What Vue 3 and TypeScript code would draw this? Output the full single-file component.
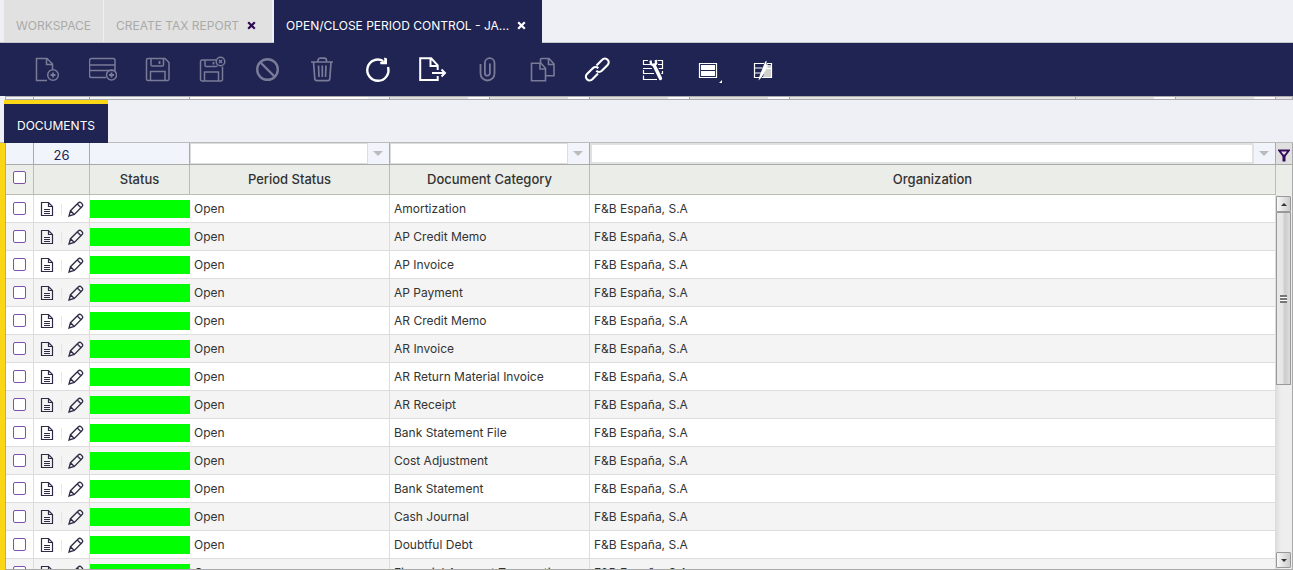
<script setup lang="ts">
import { computed, ref } from 'vue'

interface DocumentRow {
  category: string
  status: string
  organization: string
  selected: boolean
}

interface ToolAction {
  id: string
  label: string
  enabled: boolean
}

const categories: string[] = [
  'Amortization',
  'AP Credit Memo',
  'AP Invoice',
  'AP Payment',
  'AR Credit Memo',
  'AR Invoice',
  'AR Return Material Invoice',
  'AR Receipt',
  'Bank Statement File',
  'Cost Adjustment',
  'Bank Statement',
  'Cash Journal',
  'Doubtful Debt',
  'Financial Account Transaction',
]

const rows = ref<DocumentRow[]>(
  categories.map((category) => ({
    category,
    status: 'Open',
    organization: 'F&B España, S.A',
    selected: false,
  })),
)

const total = 26
const allSelected = ref(false)
const filters = ref({ status: '', category: '', organization: '' })

function toggleAll(): void {
  rows.value.forEach((row) => (row.selected = allSelected.value))
}

const tools: ToolAction[] = [
  { id: 'new', label: 'New in form', enabled: false },
  { id: 'newrow', label: 'New in grid', enabled: false },
  { id: 'save', label: 'Save', enabled: false },
  { id: 'saveclose', label: 'Save and close', enabled: false },
  { id: 'undo', label: 'Undo', enabled: false },
  { id: 'delete', label: 'Delete', enabled: false },
  { id: 'refresh', label: 'Refresh', enabled: true },
  { id: 'export', label: 'Export', enabled: true },
  { id: 'attach', label: 'Attachments', enabled: false },
  { id: 'copy', label: 'Clone', enabled: false },
  { id: 'link', label: 'Link', enabled: true },
  { id: 'personalize', label: 'Personalize form', enabled: true },
  { id: 'views', label: 'Views', enabled: true },
  { id: 'editgrid', label: 'Edit in grid', enabled: true },
]

const visibleRows = 13.3
const thumbStyle = computed(() => ({ height: `${Math.round((visibleRows / total) * 100)}%` }))
</script>

<template>
  <div class="app">
    <nav class="tabs" aria-label="Windows">
      <div class="tab"><button class="tab-name">WORKSPACE</button></div>
      <div class="tab">
        <button class="tab-name">CREATE TAX REPORT</button>
        <button class="close" aria-label="Close tab">
          <svg width="9" height="9" viewBox="0 0 9 9" stroke-width="2.2"><path d="M1.2 1.2l6.6 6.6M7.8 1.2L1.2 7.8" /></svg>
        </button>
      </div>
      <div class="tab active">
        <button class="tab-name">OPEN/CLOSE PERIOD CONTROL - JA...</button>
        <button class="close" aria-label="Close tab">
          <svg width="9" height="9" viewBox="0 0 9 9" stroke-width="2.2"><path d="M1.2 1.2l6.6 6.6M7.8 1.2L1.2 7.8" /></svg>
        </button>
      </div>
    </nav>

    <div class="toolbar" role="toolbar">
      <button
        v-for="tool in tools"
        :key="tool.id"
        class="tool"
        :disabled="!tool.enabled"
        :aria-label="tool.label"
      >
        <svg width="28" height="28" viewBox="0 0 28 28" stroke-width="1.5">
          <g v-if="tool.id === 'new'">
            <path d="M13 24.5H2.5v-22h10.500l5.500 5.500v5M12.500 3v5.500h5.500" />
            <circle cx="19" cy="19" r="5.3" /><path d="M19 16.500v5M16.500 19h5" stroke-width="1.800" />
          </g>
          <g v-else-if="tool.id === 'newrow'">
            <path d="M17 21.5H2.5a2 2 0 0 1-2-2v-15a2 2 0 0 1 2-2H24a2 2 0 0 1 2 2v11M.5 9H26M.5 14.5H26" />
            <circle cx="22.500" cy="19" r="5" /><path d="M22.5 16.5v5M20 19h5" stroke-width="1.8" />
          </g>
          <g v-else-if="tool.id === 'save'">
            <path d="M4 2.5h17l4 4V23a1.500 1.500 0 0 1-1.500 1.500H4A1.500 1.500 0 0 1 2.500 23V4A1.500 1.500 0 0 1 4 2.500zM7 2.500V9a1 1 0 0 0 1 1h10.500a1 1 0 0 0 1-1V2.500M6.500 24.500v-9H21v9" />
            <path d="M15.5 5v3" stroke-width="1.8" />
          </g>
          <g v-else-if="tool.id === 'saveclose'">
            <path d="M17 4H3a1.5 1.5 0 0 0-1.500 1.500v18A1.500 1.500 0 0 0 3 25h19a1.500 1.500 0 0 0 1.500-1.500v-13M6 4v5.500a1 1 0 0 0 1 1h10a1 1 0 0 0 1-1M5.500 25v-9h14v9" />
            <path d="M14.5 6v2.5" stroke-width="1.8" />
            <circle cx="21.5" cy="5.5" r="4.3" /><path d="M20 4l3 3M23 4l-3 3" />
          </g>
          <g v-else-if="tool.id === 'undo'" stroke-width="2.4">
            <circle cx="13.5" cy="13.5" r="10.3" /><path d="M6.500 6.500l14 14" />
          </g>
          <g v-else-if="tool.id === 'delete'" stroke-width="1.7">
            <path d="M2 6h22M9 6V4.500a2.300 2.300 0 0 1 2.300-2.300h4a2.300 2.300 0 0 1 2.200 2.300V6M4.500 6l1.300 17a2 2 0 0 0 2 1.700h11a2 2 0 0 0 2-1.700L22 6M9.500 9.500L10 21M13.300 9.500V21M17 9.500L16.500 21" />
          </g>
          <g v-else-if="tool.id === 'refresh'">
            <path d="M24 11A10.600 10.600 0 1 1 19.200 5" stroke-width="2.4" />
            <path class="solid" d="M20.200 1.500l2.800 1v5.700h-6.500l-.5-2.200 4.200-1z" />
          </g>
          <g v-else-if="tool.id === 'export'" stroke-width="2">
            <path d="M18.700 20v4H1.200V2.300h11l6.500 7V14M11.500 3v7h7M13 17h13M22.500 13.500L26 17l-3.500 3.500" />
          </g>
          <g v-else-if="tool.id === 'attach'" stroke-width="1.8">
            <path d="M6.500 8v9.500a7 7 0 0 0 14 0V7a4.800 4.800 0 0 0-9.600 0v10.200a2.500 2.500 0 0 0 5 0V7.500" />
          </g>
          <g v-else-if="tool.id === 'copy'" stroke-width="1.6">
            <path d="M2.500 7.200h9.500l4.500 5v12.500h-14zM11 7.500V13h5.500M11.500 7V3.500a1 1 0 0 1 1-1H20l5 5.500v11.700h-8.500M19.500 3v5.500H25" />
          </g>
          <g v-else-if="tool.id === 'link'" stroke-width="2.1">
            <path d="M12.500 9.500l5.700-5.800a3.700 3.700 0 0 1 5.400 0 3.700 3.700 0 0 1 0 5.300l-5.800 5.800a4 4 0 0 1-5.500 0M14 17.500l-5.600 5.800a3.700 3.700 0 0 1-5.400 0 3.700 3.700 0 0 1 0-5.300l5.800-5.800a4 4 0 0 1 5.500 0" />
          </g>
          <g v-else-if="tool.id === 'personalize'">
            <path d="M9 4.500H4.500v4H11M18.500 4.500h5v4H19M4 12.500h9M19 12.500h4.500V9M4.500 14v3.500H15M20 17.500h3.500V15M4.500 19.500v4H18" stroke-width="1.200" />
            <path d="M15 10l6.500 12.500" stroke="#202452" stroke-width="6" />
            <path d="M15 9l6.500 13.500" stroke-width="3.400" stroke-linecap="round" />
            <path d="M11.500 4.500l.5 3.500 3 1.500 2.200-2L16.700 4" stroke-width="2.300" />
          </g>
          <g v-else-if="tool.id === 'views'">
            <path d="M5.500 7.500h17v14h-17z" stroke-width="1.2" />
            <path class="solid" d="M7 9h14v5H7zM7 15h14v5H7zM28 24v3h-3z" />
          </g>
          <g v-else>
            <path d="M15 7.500H5.500v14H11M5.500 12h8M5.500 17H12M18 7.500h4.500v14H13" stroke-width="1.200" />
            <path class="shade" d="M17 9h5v12h-8z" />
            <path d="M18 8v4.500h5" stroke-width="1" />
            <path class="solid" d="M17.500 4.500V13L12.500 21.500l-3 3 1-4.500 5.500-14z" />
          </g>
        </svg>
      </button>
    </div>

    <div class="parent-strip">
      <i class="p-check"></i><i class="p-tools"></i><i class="p-100"></i>
      <i class="p-200 lit"></i><i class="p-100 dim"></i><i class="p-100 dim"></i><i class="p-100 dim"></i><i class="p-100 dim"></i>
      <i class="p-fill"></i><i class="p-100 dim"></i><i class="p-100 dim"></i><i class="p-end"></i>
    </div>

    <div class="child-tabs" role="tablist">
      <button class="child-tab" role="tab" aria-selected="true">DOCUMENTS</button>
    </div>

    <main class="grid">
      <div class="viewport">
        <table>
          <colgroup>
            <col class="c-check" /><col class="c-tools" /><col class="c-status" />
            <col class="c-wide" /><col class="c-wide" /><col />
          </colgroup>
          <thead>
            <tr class="filter-row">
              <td></td>
              <td class="count">{{ total }}</td>
              <td></td>
              <td>
                <div class="combo">
                  <input v-model="filters.status" type="text" aria-label="Filter by period status" />
                  <button aria-label="Show period statuses"><span class="caret"></span></button>
                </div>
              </td>
              <td>
                <div class="combo">
                  <input v-model="filters.category" type="text" aria-label="Filter by document category" />
                  <button aria-label="Show document categories"><span class="caret"></span></button>
                </div>
              </td>
              <td>
                <div class="combo boxed">
                  <input v-model="filters.organization" type="text" aria-label="Filter by organization" />
                  <button aria-label="Show organizations"><span class="caret"></span></button>
                </div>
              </td>
            </tr>
            <tr class="head-row">
              <th class="check">
                <input v-model="allSelected" type="checkbox" aria-label="Select all" @change="toggleAll" />
              </th>
              <th></th>
              <th>Status</th>
              <th>Period Status</th>
              <th>Document Category</th>
              <th>Organization</th>
            </tr>
          </thead>
          <tbody>
            <tr v-for="row in rows" :key="row.category">
              <td class="check">
                <input v-model="row.selected" type="checkbox" :aria-label="`Select ${row.category}`" />
              </td>
              <td>
                <div class="row-tools">
                  <button aria-label="Open in form">
                    <svg width="14" height="16" viewBox="0 0 14 16" stroke-width="1.2">
                      <path d="M1.500 1.500H8.500l4 4V14.500h-11zM8.500 1.500v4h4" />
                      <path d="M4 8.500h6M4 10.500h6M4 12.500h6" stroke-width="1" />
                    </svg>
                  </button>
                  <span class="split"></span>
                  <button aria-label="Edit in grid">
                    <svg width="16" height="16" viewBox="0 0 16 16" stroke-width="1.3">
                      <path d="M1 15l1.500-5.300 7.700-7.700c1-1 2.100-1 3-.1l.8.8c.9.9.9 2-.1 3L6.300 13.500zM9.300 3l3.700 3.700M2.500 9.700l3.800 3.800" />
                    </svg>
                  </button>
                </div>
              </td>
              <td class="swatch-cell"><div class="swatch"></div></td>
              <td>{{ row.status }}</td>
              <td>{{ row.category }}</td>
              <td>{{ row.organization }}</td>
            </tr>
          </tbody>
        </table>
      </div>
      <aside class="side">
        <button class="funnel" aria-label="Clear filters">
          <svg width="12" height="13" viewBox="0 0 12 13">
            <path d="M1.2 1.5h9.600L7 6.500H5z" stroke-width="1.8" />
            <path d="M6 6.500v6" stroke-width="3" />
          </svg>
        </button>
        <div class="side-head"></div>
        <div class="scrollbar">
          <button class="step" aria-label="Scroll up"><span class="arrow up"></span></button>
          <div class="track">
            <div class="thumb" :style="thumbStyle"><span class="grip"></span></div>
          </div>
          <button class="step" aria-label="Scroll down"><span class="arrow down"></span></button>
        </div>
      </aside>
    </main>
  </div>
</template>

<style>
body {
  margin: 0;
  overflow: hidden;
}
</style>

<style scoped>
.app {
  display: flex;
  flex-direction: column;
  height: 100vh;
  background: #eff0f6;
  color: #333;
  font-family: Inter, "Open Sans", sans-serif;
  font-size: 12px;
  overflow: hidden;
}
* {
  box-sizing: border-box;
}
button {
  padding: 0;
  border: 0;
  background: none;
  color: inherit;
  font: inherit;
  display: flex;
  align-items: center;
  justify-content: center;
}
svg {
  display: block;
  fill: none;
  stroke: currentColor;
}
.solid {
  fill: currentColor;
  stroke: none;
}
.shade {
  fill: #d0d0cc;
  stroke: none;
}

.tabs {
  display: flex;
  flex: none;
  gap: 1px;
  height: 43px;
  padding-left: 4px;
  border-bottom: 1px solid #c3c7cc;
}
.tab {
  display: flex;
  align-items: center;
  gap: 8px;
  height: 42px;
  padding: 8px 12px 0;
  background: #e1e1e1;
  color: #aaa;
  white-space: nowrap;
}
.tab + .tab {
  padding-right: 16px;
}
.tab.active {
  height: 43px;
  margin-left: 1px;
  background: #202452;
  color: #fff;
}
.close {
  color: #2e0854;
}
.active .close {
  color: #fff;
}

.toolbar {
  display: flex;
  flex: none;
  height: 53px;
  padding-left: 20px;
  background: #202452;
}
.tool {
  width: 55px;
  height: 53px;
  color: #fff;
}
.tool:disabled {
  color: #797b98;
}

.parent-strip {
  display: flex;
  flex: none;
  height: 4px;
  margin-left: 5px;
  border: 1px solid #aaa;
  border-right: 0;
  background: #f1f4fb;
}
.parent-strip i {
  border-right: 1px solid #aaa;
}
.p-check { width: 28px; }
.p-tools { width: 56px; }
.p-100 { width: 100px; }
.p-200 { width: 200px; }
.p-fill { flex: 1; background: #e4e4e4; }
.p-end { width: 17px; background: #e8e0e8; }
.lit { background: linear-gradient(to right, #fff 178px, #f1f4fb 178px); }
.dim { background: linear-gradient(to right, #e1e0e0 78px, #fafaff 78px); }

.child-tabs {
  display: flex;
  flex: none;
  height: 43px;
  padding-left: 4px;
  border-bottom: 1px solid #bbb;
}
.child-tab {
  height: 43px;
  padding: 4px 13px 0;
  border-top: 4px solid #fbd616;
  background: #202452;
  color: #fff;
}

.grid {
  display: flex;
  flex: 1;
  min-height: 0;
  border-left: 5px solid #fbd616;
}
.viewport {
  flex: 1;
  min-width: 0;
  overflow: hidden;
  border-left: 1px solid #aaa;
  border-bottom: 1px solid #aaa;
  background: #fff;
}
table {
  width: 100%;
  table-layout: fixed;
  border-spacing: 0;
}
.c-check { width: 28px; }
.c-tools { width: 56px; }
.c-status { width: 100px; }
.c-wide { width: 200px; }

td,
th {
  height: 28px;
  padding: 0 4px;
  border-right: 1px solid #ddd;
  border-bottom: 1px solid #ddd;
  text-align: left;
  white-space: nowrap;
}
tbody tr:nth-child(even) {
  background: #f4f4f4;
}
.filter-row td {
  height: 22px;
  padding: 0;
  border-color: #aaa;
  background: #f1f5fb;
}
.filter-row .count {
  padding-top: 3px;
  color: #202452;
  font-size: 13px;
  text-align: center;
}
.head-row th {
  height: 30px;
  padding-bottom: 2px;
  border-color: #b9beb0;
  background: #eaede8;
  font-size: 13px;
  font-weight: 500;
  text-align: center;
}
.combo {
  display: flex;
  height: 21px;
}
.combo input {
  flex: 1;
  min-width: 0;
  margin: 0;
  padding: 0 4px;
  border: 1px solid #ddd;
  background: #fff;
  font: inherit;
}
.combo.boxed input {
  border: 2px solid #e1e1e1;
}
.combo button {
  width: 21px;
  padding-right: 2px;
}
.caret {
  border: 5px solid transparent;
  border-top-color: #bbb;
  border-bottom: 0;
}

td.check,
.head-row th.check {
  padding: 0 0 0 7px;
}
.head-row th.check {
  padding-bottom: 5px;
}
.check input {
  display: block;
  appearance: none;
  width: 13px;
  height: 13px;
  margin: 0;
  border: 1px solid #8350a8;
  border-radius: 2px;
  background: #fff;
}
.check input:checked {
  background: #8350a8;
}
.row-tools {
  display: flex;
  align-items: center;
  justify-content: space-between;
  padding: 1px 1px 0 2px;
  color: #2f2d45;
}
.split {
  width: 1px;
  height: 11px;
  background: #e6e6ea;
}
.swatch-cell {
  padding: 0;
  border-right-color: transparent;
}
.swatch {
  height: 18px;
  margin-right: -1px;
  background: #0f0;
}

.side {
  display: flex;
  flex-direction: column;
  flex: none;
  width: 17px;
  border-right: 1px solid #aaa;
  border-bottom: 1px solid #aaa;
}
.funnel {
  height: 22px;
  padding-top: 3px;
  border-bottom: 1px solid #aaa;
  background: #e1e0e0;
  color: #330a5c;
}
.side-head {
  height: 30px;
  background: #eaede8;
}
.scrollbar {
  display: flex;
  flex: 1;
  flex-direction: column;
  min-height: 0;
  padding: 1px 1px 1px 0;
  background: linear-gradient(to right, #ddd, #eee 5px);
}
.step {
  flex: none;
  height: 16px;
  border: 1px solid #999;
  border-radius: 1px;
  background: linear-gradient(to right, #f8f8f8, #ccc);
}
.track {
  flex: 1;
  min-height: 0;
}
.thumb {
  display: flex;
  align-items: center;
  justify-content: center;
  border: 1px solid #999;
  background: linear-gradient(to right, #e8e8e8 40%, #ccc 60%, #ddd);
}
.grip {
  width: 7px;
  height: 8px;
  background: repeating-linear-gradient(#777 0 2px, #fff 2px 3px);
}
.arrow {
  border: 3px solid transparent;
}
.up {
  border-bottom-color: #333;
  border-top: 0;
}
.down {
  border-top-color: #333;
  border-bottom: 0;
}
</style>
